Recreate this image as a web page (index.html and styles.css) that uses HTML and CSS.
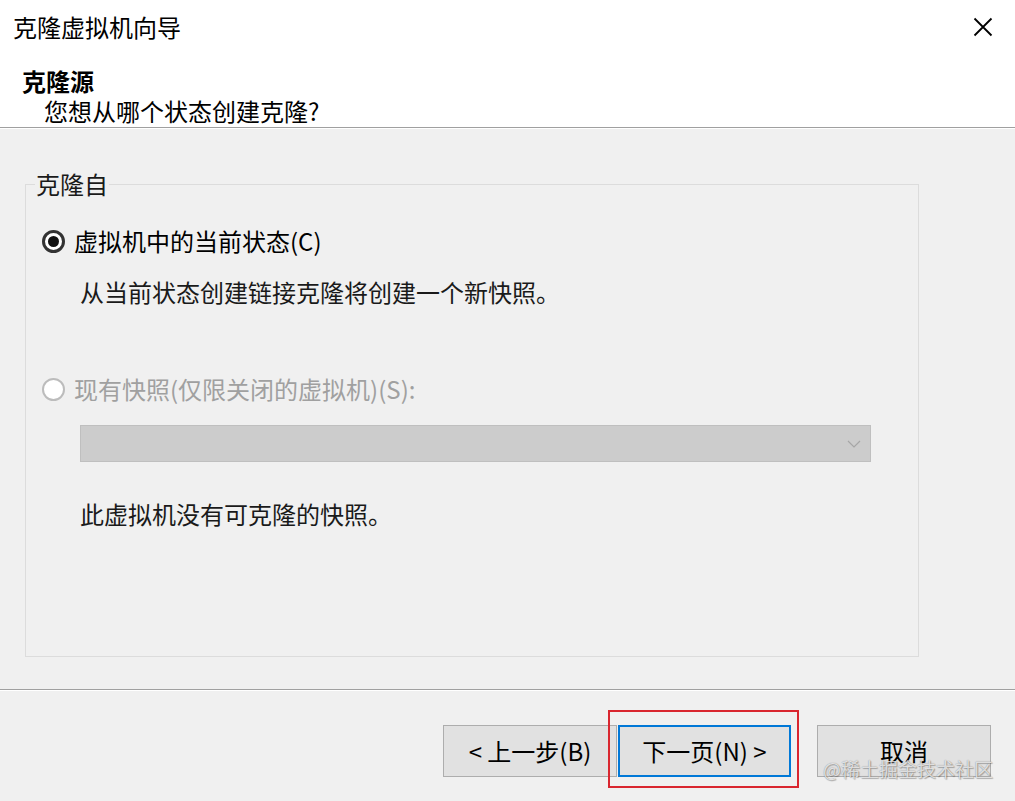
FILE: index.html
```html
<!DOCTYPE html>
<html lang="zh-CN">
<head>
<meta charset="utf-8">
<title>克隆虚拟机向导</title>
<link rel="stylesheet" href="styles.css">
</head>
<body>
<div class="window">
  <div class="titlebar">
    <span class="title">克隆虚拟机向导</span>
    <span class="close">
      <svg width="20" height="20" viewBox="0 0 20 20"><path d="M1.5 1.5 L18.5 18.5 M18.5 1.5 L1.5 18.5" stroke="#000" stroke-width="1.8" fill="none"/></svg>
    </span>
  </div>
  <div class="header">
    <div class="h-title">克隆源</div>
    <div class="h-sub">您想从哪个状态创建克隆?</div>
  </div>
  <div class="content">
    <fieldset class="group">
      <legend>克隆自</legend>
      <div class="radio checked"><span class="dot"></span><span>虚拟机中的当前状态(C)</span></div>
      <p class="desc first">从当前状态创建链接克隆将创建一个新快照。</p>
      <div class="radio disabled"><span class="dot"></span><span>现有快照(仅限关闭的虚拟机)(S):</span></div>
      <div class="combo">
        <svg width="14" height="8" viewBox="0 0 14 8"><path d="M1 1 L7 7 L13 1" stroke="#a6a6a6" stroke-width="1.2" fill="none"/></svg>
      </div>
      <p class="desc note">此虚拟机没有可克隆的快照。</p>
    </fieldset>
  </div>
  <div class="footer">
    <button class="btn">&lt; 上一步(B)</button>
    <span class="btn-wrap"><button class="btn default">下一页(N) &gt;</button></span>
    <button class="btn cancel">取消</button>
  </div>
  <div class="watermark">@稀土掘金技术社区</div>
</div>
</body>
</html>
```

FILE: styles.css
```css
* { box-sizing: border-box; }
html, body { margin: 0; padding: 0; }
body {
  width: 1015px;
  height: 801px;
  overflow: hidden;
  background: #f0f0f0;
  font-family: "Noto Sans CJK SC", "Microsoft YaHei", sans-serif;
  color: #000;
}
.window {
  position: relative;
  display: flex;
  flex-direction: column;
  width: 1015px;
  height: 801px;
}
.titlebar {
  height: 54px;
  background: #fff;
  display: flex;
  align-items: center;
  justify-content: space-between;
  padding: 0 22px 0 13px;
}
.title {
  font-size: 24px;
  line-height: 30px;
}
.close { display: flex; }
.header {
  background: #fff;
  padding: 12px 0 1px 22px;
  border-bottom: 1px solid #a0a0a0;
}
.h-title {
  font-size: 24px;
  line-height: 30px;
  font-weight: bold;
}
.h-sub {
  font-size: 24px;
  line-height: 30px;
  padding-left: 22px;
}
.content {
  height: 562px;
  border-top: 1px solid #fff;
  border-bottom: 1px solid #a0a0a0;
  padding: 40px 0 0 25px;
}
.group {
  margin: 0;
  width: 894px;
  height: 488px;
  border: 1px solid #dcdcdc;
  padding: 0;
  font-size: 24px;
}
.group legend {
  font-size: 24px;
  line-height: 30px;
  margin-left: 9px;
  padding: 0 1px;
  color: #1a1a1a;
}
.radio {
  display: flex;
  align-items: center;
  height: 34px;
  margin-left: 16px;
  font-size: 24px;
  line-height: 34px;
}
.checked { margin-top: 25px; }
.dot {
  width: 23px;
  height: 23px;
  border-radius: 50%;
  background: #fff;
  margin-right: 9px;
  display: flex;
  align-items: center;
  justify-content: center;
  flex: none;
}
.checked .dot { border: 3px solid #333; }
.checked .dot::after {
  content: "";
  width: 11px;
  height: 11px;
  border-radius: 50%;
  background: #111;
}
.disabled { margin-top: 63px; color: #a0a0a0; }
.disabled .dot { border: 2px solid #bcbcbc; }
.desc {
  margin: 17px 0 0 54px;
  font-size: 24px;
  line-height: 34px;
  color: #1a1a1a;
}
.combo {
  margin: 19px 0 0 54px;
  width: 791px;
  height: 37px;
  background: #cccccc;
  border: 1px solid #bfbfbf;
  display: flex;
  align-items: center;
  justify-content: flex-end;
  padding-right: 9px;
}
.desc.note { margin-top: 35px; }
.footer {
  flex: 1;
  border-top: 1px solid #fff;
  display: flex;
  justify-content: flex-end;
  align-items: flex-start;
  padding: 34px 24px 0 0;
}
.btn {
  font-family: "Noto Sans CJK SC", "Microsoft YaHei", sans-serif;
  font-size: 24px;
  color: #000;
  background: #e1e1e1;
  border: 1px solid #adadad;
  height: 52px;
  width: 174px;
  padding: 0;
  margin: 0;
  line-height: 30px;
}
.btn-wrap {
  position: relative;
  margin-left: 1px;
  margin-right: 26px;
  display: flex;
}
.btn.default {
  width: 173px;
  border: 2px solid #0078d7;
}
.btn-wrap::after {
  content: "";
  position: absolute;
  left: -10px;
  right: -8px;
  top: -15px;
  bottom: -11px;
  border: 2px solid #d9262f;
  pointer-events: none;
}
.watermark {
  position: absolute;
  right: 22px;
  bottom: 20px;
  font-size: 19px;
  line-height: 24px;
  color: rgba(255, 255, 255, 0.75);
  text-shadow: 0 0 1px rgba(0, 0, 0, 0.45), 1px 1px 1px rgba(0, 0, 0, 0.25);
}
```
